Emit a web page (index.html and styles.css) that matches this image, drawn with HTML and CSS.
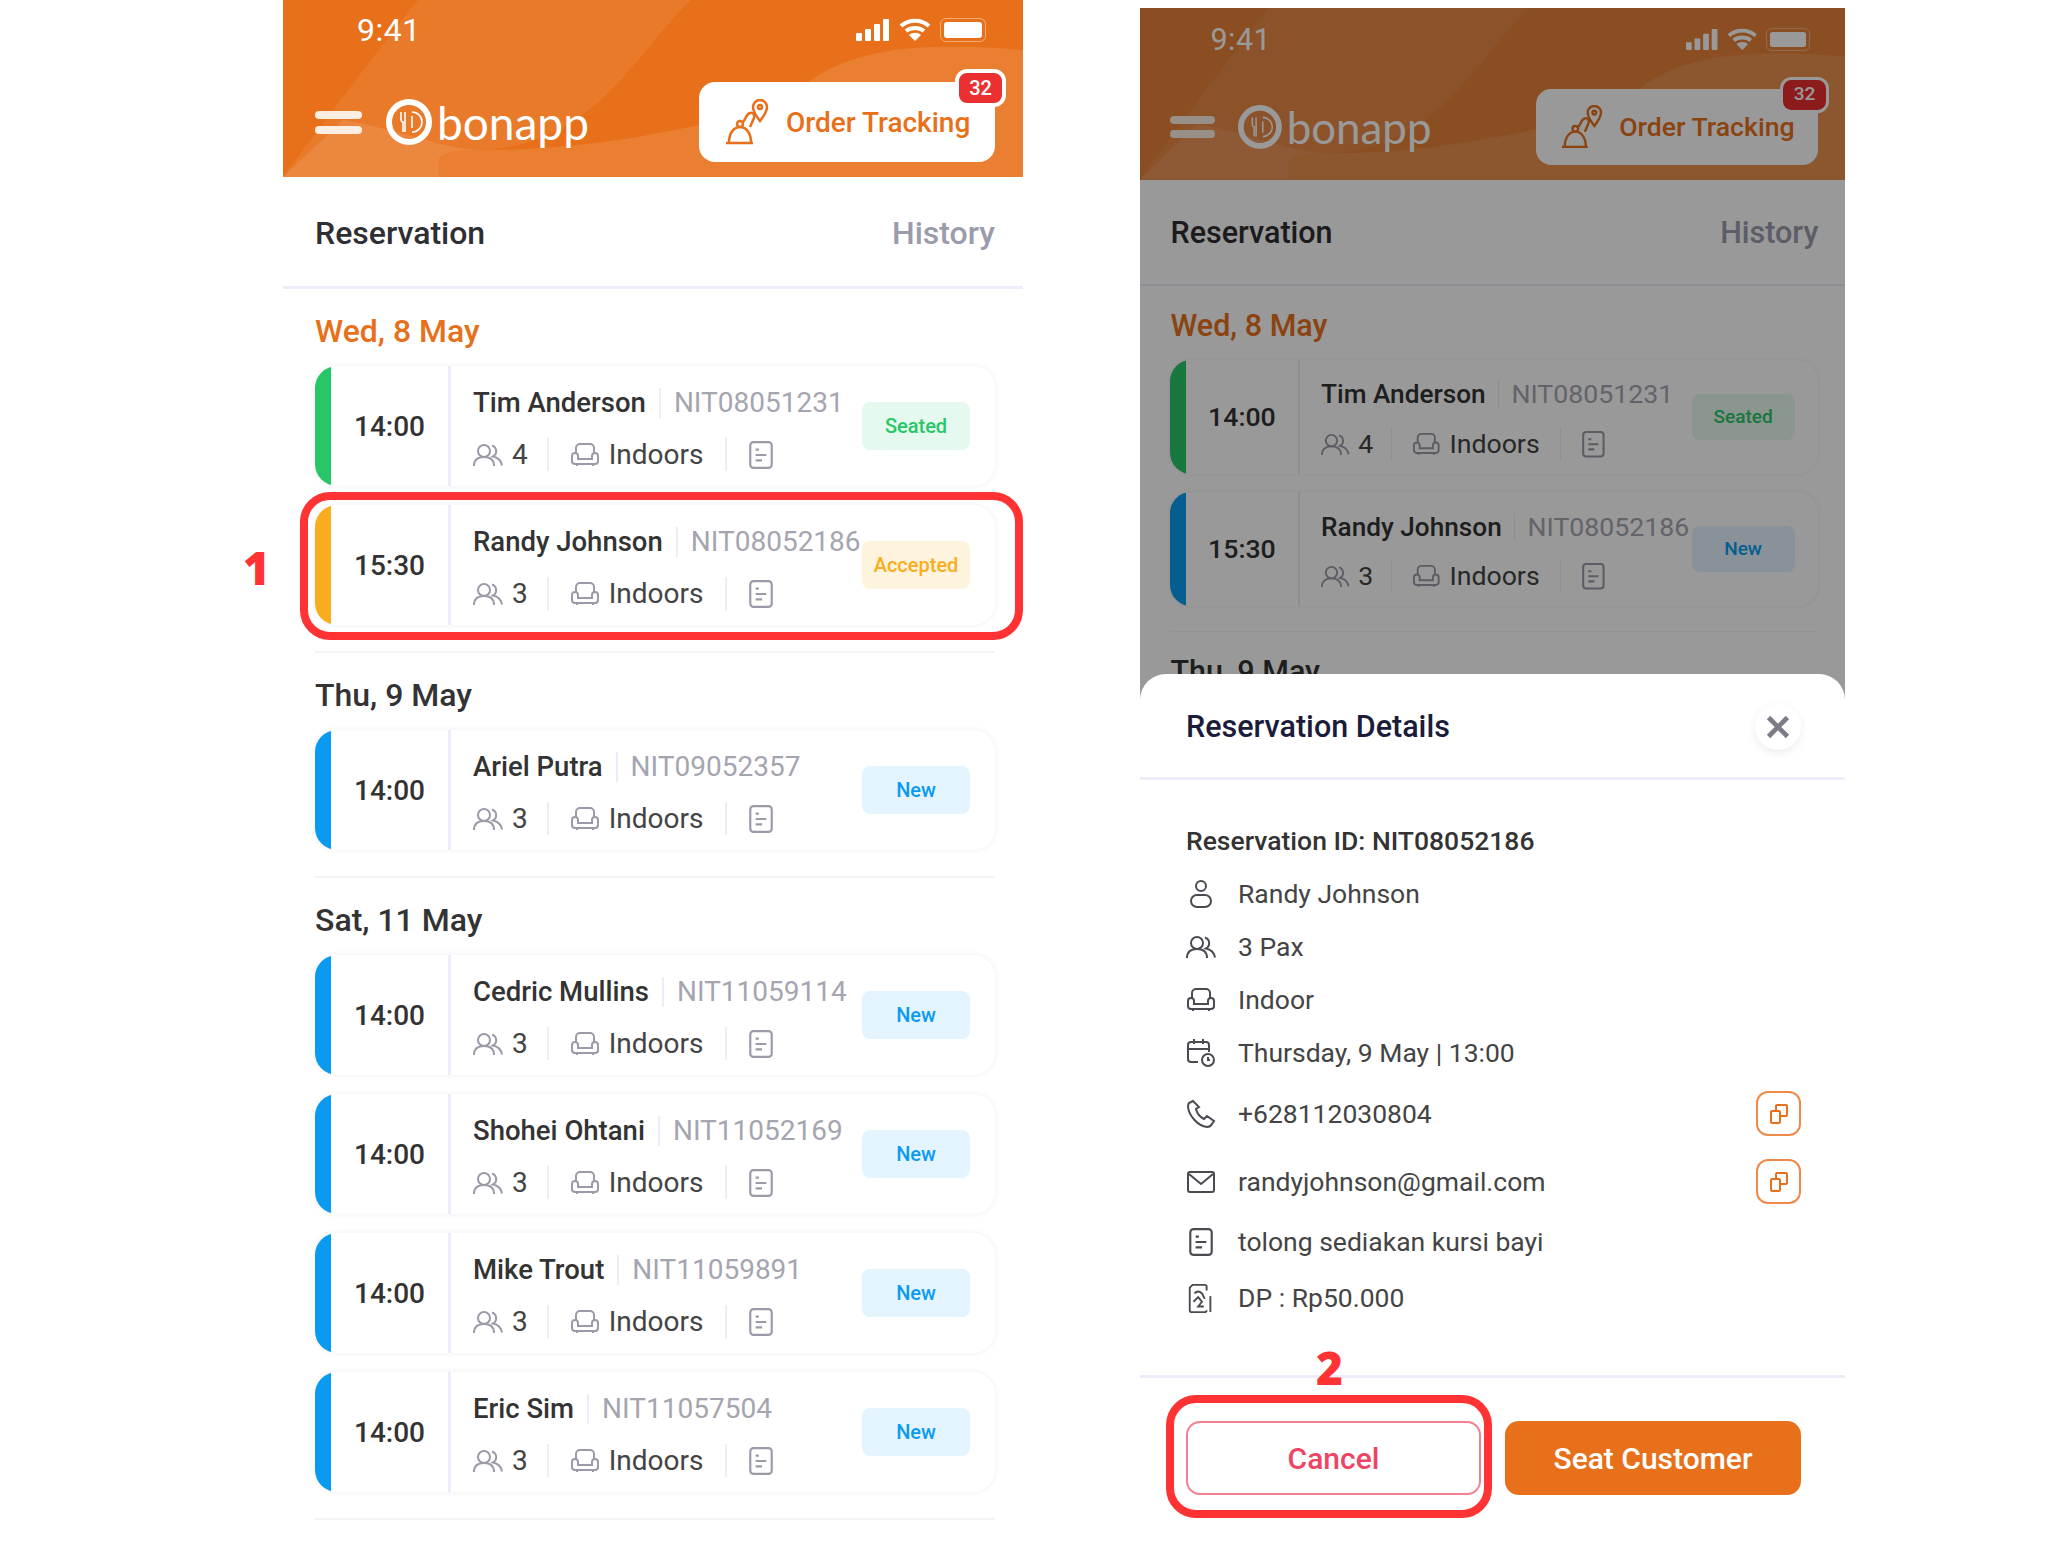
FILE: index.html
```html
<!DOCTYPE html>
<html>
<head>
  <meta charset="UTF-8">
  <title>Bonapp Reservations</title>
  <link rel="stylesheet" href="styles.css">
</head>
<body>
  <svg class="sprite" xmlns="http://www.w3.org/2000/svg">
    <symbol id="i-group" viewBox="0 0 30 24"><circle cx="11" cy="8" r="6"/><path d="M1 23c0-6 4-9 10-9s10 3 10 9"/><path d="M19 2.500a6 6 0 0 1 1 11c5 1 8 4 9 9"/></symbol>
    <symbol id="i-sofa" viewBox="0 0 30 26"><path d="M6 11V6a4 4 0 0 1 4-4h10a4 4 0 0 1 4 4v5"/><path d="M8 17v-3a3 3 0 0 0-6 0v5a3 3 0 0 0 3 3h20a3 3 0 0 0 3-3v-5a3 3 0 0 0-6 0v3z"/><path d="M7 22v2M23 22v2"/></symbol>
    <symbol id="i-note" viewBox="0 0 24 28"><rect x="2" y="2" width="20" height="24" rx="3"/><path d="M7 9h3M7 14h10M7 19h6"/></symbol>
    <symbol id="i-person" viewBox="0 0 26 30"><circle cx="13" cy="7" r="5"/><rect x="3" y="16" width="20" height="12" rx="6"/></symbol>
    <symbol id="i-calendar" viewBox="0 0 30 30"><path d="M12 24H5a3 3 0 0 1-3-3V7a3 3 0 0 1 3-3h15a3 3 0 0 1 3 3v7"/><path d="M2 11h21M8 1v5M17 1v5"/><circle cx="22" cy="22" r="6"/><path d="M22 19v3h2"/></symbol>
    <symbol id="i-phone" viewBox="0 0 30 30"><path d="M7 2 3 4c-1 1-1 3-1 4 1 9 10 19 19 20 2 0 4-1 5-3l2-3-7-5-3 3c-4-2-7-6-8-10l3-2z"/></symbol>
    <symbol id="i-mail" viewBox="0 0 30 24"><rect x="2" y="2" width="26" height="20" rx="2"/><path d="m3 4 12 10L27 4"/></symbol>
    <symbol id="i-money" viewBox="0 0 28 32"><path d="M20 8V4a2 2 0 0 0-2-2H5L2 5v24a2 2 0 0 0 2 2h14a2 2 0 0 0 2-2"/><path d="M7 11c3-3 6-2 8 0l3 6M6 20l5-5 4 5-4 5h6"/><path d="M24 14v17"/></symbol>
    <symbol id="i-copy" viewBox="0 0 20 22"><rect x="2" y="8" width="9" height="12" rx="1"/><path d="M7 8V3a1 1 0 0 1 1-1h9a1 1 0 0 1 1 1v9a1 1 0 0 1-1 1h-6"/></symbol>
    <symbol id="i-cloche" viewBox="0 0 46 46"><path d="M1 44h27M4 43c0-9 5-15 11-15s11 6 11 15"/><circle cx="15" cy="25" r="3"/><path d="M18 23c3-3 3-8 7-9 3-1 5 2 4 5l-4 9"/><path d="M35 1a7 7 0 0 0-7 7c0 5 7 14 7 14s7-9 7-14a7 7 0 0 0-7-7z"/><circle cx="35" cy="8" r="2"/></symbol>
  </svg>

  <main class="stage">
    <section class="phone">
      <div class="screen">
        <header class="app-header">
          <svg class="header-bg" viewBox="0 0 740 177" preserveAspectRatio="none"><path class="swoosh-a" d="M0 177C50 110 95 50 135 0H408C350 55 310 150 190 150 130 150 170 177 150 177z"/><path class="swoosh-b" d="M0 177 60 120C120 130 160 150 200 150 320 150 420 125 500 105 550 50 620 40 740 50V177z"/></svg>
          <div class="status-bar">
            <span class="clock">9:41</span>
            <span class="status-icons">
              <svg class="signal" viewBox="0 0 34 22"><rect x="0" y="14" width="6" height="8" rx="1"/><rect x="9" y="10" width="6" height="12" rx="1"/><rect x="18" y="5" width="6" height="17" rx="1"/><rect x="27" y="0" width="6" height="22" rx="1"/></svg>
              <svg class="wifi" viewBox="0 0 32 24"><path d="M2 8c8-7 20-7 28 0M7 13c5-4 13-4 18 0"/><path class="wifi-dot" d="m16 23-6-6c3-3 9-3 12 0z"/></svg>
              <span class="battery"><span class="battery-fill"></span></span>
            </span>
          </div>
          <div class="nav-row">
            <div class="burger"><span></span><span></span></div>
            <svg class="logo-mark" viewBox="0 0 46 46"><circle cx="23" cy="23" r="20"/><path d="M26 13a10 10 0 0 1 0 20M26 17v12M15 13v7c0 2 1 3 2 3v10M19 13v20"/></svg>
            <span class="logo-text">bonapp</span>
            <div class="tracking-btn">
              <svg class="cloche"><use href="#i-cloche"/></svg>
              <span>Order Tracking</span>
              <b class="tracking-count">32</b>
            </div>
          </div>
        </header>

        <nav class="tabs">
          <span class="tab-active">Reservation</span>
          <span class="tab-idle">History</span>
        </nav>

        <div class="list">
          <section class="day">
            <h2 class="day-title today">Wed, 8 May</h2>
            <article class="card">
              <i class="card-bar green"></i><div class="card-time">14:00</div>
              <div class="card-body">
                <div class="card-name"><span>Tim Anderson</span><em>NIT08051231</em></div>
                <div class="card-meta"><svg class="ic-group"><use href="#i-group"/></svg><span class="pax">4</span><svg class="ic-sofa"><use href="#i-sofa"/></svg><span class="place">Indoors</span><svg class="ic-note"><use href="#i-note"/></svg></div>
              </div>
              <span class="tag seated">Seated</span>
            </article>
            <article class="card">
              <i class="card-bar amber"></i><div class="card-time">15:30</div>
              <div class="card-body">
                <div class="card-name"><span>Randy Johnson</span><em>NIT08052186</em></div>
                <div class="card-meta"><svg class="ic-group"><use href="#i-group"/></svg><span class="pax">3</span><svg class="ic-sofa"><use href="#i-sofa"/></svg><span class="place">Indoors</span><svg class="ic-note"><use href="#i-note"/></svg></div>
              </div>
              <span class="tag accepted">Accepted</span>
            </article>
          </section>
          <section class="day">
            <h2 class="day-title">Thu, 9 May</h2>
            <article class="card">
              <i class="card-bar blue"></i><div class="card-time">14:00</div>
              <div class="card-body">
                <div class="card-name"><span>Ariel Putra</span><em>NIT09052357</em></div>
                <div class="card-meta"><svg class="ic-group"><use href="#i-group"/></svg><span class="pax">3</span><svg class="ic-sofa"><use href="#i-sofa"/></svg><span class="place">Indoors</span><svg class="ic-note"><use href="#i-note"/></svg></div>
              </div>
              <span class="tag new">New</span>
            </article>
          </section>
          <section class="day">
            <h2 class="day-title">Sat, 11 May</h2>
            <article class="card">
              <i class="card-bar blue"></i><div class="card-time">14:00</div>
              <div class="card-body">
                <div class="card-name"><span>Cedric Mullins</span><em>NIT11059114</em></div>
                <div class="card-meta"><svg class="ic-group"><use href="#i-group"/></svg><span class="pax">3</span><svg class="ic-sofa"><use href="#i-sofa"/></svg><span class="place">Indoors</span><svg class="ic-note"><use href="#i-note"/></svg></div>
              </div>
              <span class="tag new">New</span>
            </article>
            <article class="card">
              <i class="card-bar blue"></i><div class="card-time">14:00</div>
              <div class="card-body">
                <div class="card-name"><span>Shohei Ohtani</span><em>NIT11052169</em></div>
                <div class="card-meta"><svg class="ic-group"><use href="#i-group"/></svg><span class="pax">3</span><svg class="ic-sofa"><use href="#i-sofa"/></svg><span class="place">Indoors</span><svg class="ic-note"><use href="#i-note"/></svg></div>
              </div>
              <span class="tag new">New</span>
            </article>
            <article class="card">
              <i class="card-bar blue"></i><div class="card-time">14:00</div>
              <div class="card-body">
                <div class="card-name"><span>Mike Trout</span><em>NIT11059891</em></div>
                <div class="card-meta"><svg class="ic-group"><use href="#i-group"/></svg><span class="pax">3</span><svg class="ic-sofa"><use href="#i-sofa"/></svg><span class="place">Indoors</span><svg class="ic-note"><use href="#i-note"/></svg></div>
              </div>
              <span class="tag new">New</span>
            </article>
            <article class="card">
              <i class="card-bar blue"></i><div class="card-time">14:00</div>
              <div class="card-body">
                <div class="card-name"><span>Eric Sim</span><em>NIT11057504</em></div>
                <div class="card-meta"><svg class="ic-group"><use href="#i-group"/></svg><span class="pax">3</span><svg class="ic-sofa"><use href="#i-sofa"/></svg><span class="place">Indoors</span><svg class="ic-note"><use href="#i-note"/></svg></div>
              </div>
              <span class="tag new">New</span>
            </article>
          </section>
        </div>
      </div>
    </section>

    <section class="phone phone-details">
      <div class="screen">
        <header class="app-header">
          <svg class="header-bg" viewBox="0 0 740 177" preserveAspectRatio="none"><path class="swoosh-a" d="M0 177C50 110 95 50 135 0H408C350 55 310 150 190 150 130 150 170 177 150 177z"/><path class="swoosh-b" d="M0 177 60 120C120 130 160 150 200 150 320 150 420 125 500 105 550 50 620 40 740 50V177z"/></svg>
          <div class="status-bar">
            <span class="clock">9:41</span>
            <span class="status-icons">
              <svg class="signal" viewBox="0 0 34 22"><rect x="0" y="14" width="6" height="8" rx="1"/><rect x="9" y="10" width="6" height="12" rx="1"/><rect x="18" y="5" width="6" height="17" rx="1"/><rect x="27" y="0" width="6" height="22" rx="1"/></svg>
              <svg class="wifi" viewBox="0 0 32 24"><path d="M2 8c8-7 20-7 28 0M7 13c5-4 13-4 18 0"/><path class="wifi-dot" d="m16 23-6-6c3-3 9-3 12 0z"/></svg>
              <span class="battery"><span class="battery-fill"></span></span>
            </span>
          </div>
          <div class="nav-row">
            <div class="burger"><span></span><span></span></div>
            <svg class="logo-mark" viewBox="0 0 46 46"><circle cx="23" cy="23" r="20"/><path d="M26 13a10 10 0 0 1 0 20M26 17v12M15 13v7c0 2 1 3 2 3v10M19 13v20"/></svg>
            <span class="logo-text">bonapp</span>
            <div class="tracking-btn">
              <svg class="cloche"><use href="#i-cloche"/></svg>
              <span>Order Tracking</span>
              <b class="tracking-count">32</b>
            </div>
          </div>
        </header>

        <nav class="tabs">
          <span class="tab-active">Reservation</span>
          <span class="tab-idle">History</span>
        </nav>

        <div class="list">
          <section class="day">
            <h2 class="day-title today">Wed, 8 May</h2>
            <article class="card">
              <i class="card-bar green"></i><div class="card-time">14:00</div>
              <div class="card-body">
                <div class="card-name"><span>Tim Anderson</span><em>NIT08051231</em></div>
                <div class="card-meta"><svg class="ic-group"><use href="#i-group"/></svg><span class="pax">4</span><svg class="ic-sofa"><use href="#i-sofa"/></svg><span class="place">Indoors</span><svg class="ic-note"><use href="#i-note"/></svg></div>
              </div>
              <span class="tag seated">Seated</span>
            </article>
            <article class="card">
              <i class="card-bar blue"></i><div class="card-time">15:30</div>
              <div class="card-body">
                <div class="card-name"><span>Randy Johnson</span><em>NIT08052186</em></div>
                <div class="card-meta"><svg class="ic-group"><use href="#i-group"/></svg><span class="pax">3</span><svg class="ic-sofa"><use href="#i-sofa"/></svg><span class="place">Indoors</span><svg class="ic-note"><use href="#i-note"/></svg></div>
              </div>
              <span class="tag new">New</span>
            </article>
          </section>
          <section class="day">
            <h2 class="day-title">Thu, 9 May</h2>
          </section>
        </div>
      </div>

      <div class="scrim"></div>

      <div class="sheet">
        <div class="sheet-head">
          <h3>Reservation Details</h3>
          <span class="sheet-close">
            <svg viewBox="0 0 22 22"><path d="M3 3l16 16M19 3 3 19"/></svg>
          </span>
        </div>
        <div class="sheet-body">
          <p class="sheet-id">Reservation ID: NIT08052186</p>
          <div class="row"><svg class="row-ic"><use href="#i-person"/></svg><span>Randy Johnson</span></div>
          <div class="row"><svg class="row-ic"><use href="#i-group"/></svg><span>3 Pax</span></div>
          <div class="row"><svg class="row-ic"><use href="#i-sofa"/></svg><span>Indoor</span></div>
          <div class="row"><svg class="row-ic"><use href="#i-calendar"/></svg><span>Thursday, 9 May | 13:00</span></div>
          <div class="row row-copy"><svg class="row-ic"><use href="#i-phone"/></svg><span>+628112030804</span><span class="copy-btn"><svg><use href="#i-copy"/></svg></span></div>
          <div class="row row-copy"><svg class="row-ic"><use href="#i-mail"/></svg><span>randyjohnson@gmail.com</span><span class="copy-btn"><svg><use href="#i-copy"/></svg></span></div>
          <div class="row"><svg class="row-ic"><use href="#i-note"/></svg><span>tolong sediakan kursi bayi</span></div>
          <div class="row row-last"><svg class="row-ic"><use href="#i-money"/></svg><span>DP : Rp50.000</span></div>
        </div>
        <div class="sheet-foot">
          <button class="btn-cancel">Cancel</button>
          <button class="btn-seat">Seat Customer</button>
        </div>
      </div>
    </section>

    <div class="callout callout-one"></div>
    <span class="callout-num num-one">1</span>
    <div class="callout callout-two"></div>
    <span class="callout-num num-two">2</span>
  </main>
</body>
</html>
```

FILE: styles.css
```css
* {
  box-sizing: border-box;
}

body {
  margin: 0;
  background: #fff;
  font-family: Roboto, "Liberation Sans", sans-serif;
  color: #333;
}

.sprite {
  display: none;
}

.stage {
  position: relative;
  display: flex;
  gap: 117px;
  width: 2048px;
  height: 1550px;
  padding-left: 283px;
  overflow: hidden;
}

/* phones */
.phone {
  flex: none;
  width: 740px;
  height: 1550px;
  overflow: hidden;
}

.phone-details {
  position: relative;
  width: 705px;
  height: 1542px;
  margin-top: 8px;
}

.phone-details .screen {
  zoom: 0.953;
}

.phone-details .app-header {
  height: 180px;
  padding-top: 3px;
  background: #e8833a;
}

/* header */
.app-header {
  position: relative;
  height: 177px;
  background: #e8701a;
}

.header-bg {
  position: absolute;
  left: 0;
  top: 0;
  width: 100%;
  height: 100%;
}

.swoosh-a {
  fill: #fff;
  fill-opacity: 0.07;
}

.swoosh-b {
  fill: #fff;
  fill-opacity: 0.1;
}

.status-bar {
  position: relative;
  display: flex;
  justify-content: space-between;
  align-items: center;
  height: 60px;
  padding: 0 37px 0 74px;
  color: #fff;
}

.clock {
  font-size: 32px;
  letter-spacing: 0.5px;
}

.status-icons {
  display: flex;
  align-items: center;
  gap: 9px;
}

.signal {
  width: 34px;
  height: 22px;
  fill: #fff;
}

.wifi {
  width: 32px;
  height: 24px;
  fill: none;
  stroke: #fff;
  stroke-width: 4;
}

.wifi-dot {
  fill: #fff;
  stroke: none;
}

.battery {
  display: block;
  width: 46px;
  height: 24px;
  padding: 3px;
  border: 1px solid rgba(255,255,255,0.4);
  border-radius: 6px;
}

.battery-fill {
  display: block;
  height: 100%;
  background: #fff;
  border-radius: 3px;
}

.nav-row {
  position: relative;
  display: flex;
  align-items: center;
  height: 80px;
  margin-top: 22px;
  padding: 0 28px 0 32px;
}

.burger {
  width: 47px;
  margin-right: 24px;
}

.burger span {
  display: block;
  height: 8px;
  margin: 7px 0;
  background: #fdeee3;
  border-radius: 4px;
}

.logo-mark {
  width: 46px;
  height: 46px;
  margin-right: 5px;
  fill: none;
  stroke: #fff;
}

.logo-mark circle {
  stroke-width: 6;
}

.logo-mark path {
  stroke-width: 1.600;
}

.logo-text {
  font-family: Lato, sans-serif;
  font-size: 46px;
  line-height: 1;
  color: #fff;
  margin-top: 2px;
}

.tracking-btn {
  position: relative;
  display: flex;
  align-items: center;
  width: 296px;
  height: 80px;
  margin-left: auto;
  padding-left: 26px;
  background: #fff;
  border-radius: 16px;
  color: #e8701a;
  font-size: 28px;
  font-weight: 500;
}

.cloche {
  width: 46px;
  height: 46px;
  margin-right: 15px;
  fill: none;
  stroke: #e8701a;
  stroke-width: 2.500;
}

.tracking-count {
  position: absolute;
  right: -11px;
  top: -13px;
  width: 51px;
  height: 38px;
  line-height: 30px;
  text-align: center;
  background: #ea3030;
  border: 4px solid #fff;
  border-radius: 12px;
  color: #fff;
  font-size: 20px;
  font-weight: 500;
}

/* tabs */
.tabs {
  display: flex;
  justify-content: space-between;
  align-items: center;
  height: 112px;
  padding: 2px 28px 0 32px;
  border-bottom: 3px solid #ecedf8;
  font-size: 32px;
  font-weight: 500;
}

.tab-active {
  color: #2e2e33;
}

.tab-idle {
  color: #9a9cab;
}

/* reservation list */
.list {
  padding: 22px 28px 0 32px;
}

.day {
  margin-bottom: 22px;
  padding-bottom: 26px;
  border-bottom: 2px solid #f3f3f6;
}

.day-title {
  margin: 0 0 15px;
  font-size: 32px;
  font-weight: 500;
  line-height: 40px;
  color: #333;
}

.day-title.today {
  color: #e8701a;
}

.card {
  display: flex;
  align-items: center;
  height: 120px;
  margin-bottom: 19px;
  background: #fff;
  border-radius: 22px;
  box-shadow: 0 0 6px rgba(30,30,60,0.07);
  overflow: hidden;
}

.card:last-child {
  margin-bottom: 0;
}

.card-bar {
  flex: none;
  width: 16px;
  height: 100%;
}

.card-bar.green { background: #27c767; }
.card-bar.amber { background: #f9ad1e; }
.card-bar.blue { background: #0a9bf0; }

.card-time {
  flex: none;
  width: 120px;
  height: 100%;
  border-right: 3px solid #ecedf8;
  line-height: 121px;
  text-align: center;
  font-size: 28px;
  font-weight: 500;
}

.card-body {
  flex: 1;
  min-width: 0;
  padding: 5px 0 0 22px;
}

.card-name {
  display: flex;
  align-items: center;
  height: 34px;
  font-size: 27.500px;
  font-weight: 500;
  white-space: nowrap;
}

.card-name em {
  margin-left: 13px;
  padding-left: 13px;
  border-left: 2px solid #ecedf8;
  font-size: 28px;
  font-style: normal;
  font-weight: 400;
  line-height: 30px;
  color: #a5a5b0;
}

.card-meta {
  display: flex;
  align-items: center;
  height: 34px;
  margin-top: 18px;
  font-size: 28px;
  color: #444;
}

.card-meta svg {
  fill: none;
  stroke: #9a9aa8;
  stroke-width: 2;
}

.ic-group {
  width: 30px;
  height: 24px;
}

.pax {
  margin-left: 9px;
  padding-right: 19px;
  border-right: 2px solid #ecedf8;
}

.ic-sofa {
  width: 30px;
  height: 26px;
  margin-left: 21px;
}

.place {
  margin-left: 9px;
  padding-right: 21px;
  border-right: 2px solid #ecedf8;
}

.ic-note {
  width: 26px;
  height: 30px;
  margin-left: 21px;
}

.tag {
  flex: none;
  width: 108px;
  height: 48px;
  margin-right: 25px;
  line-height: 48px;
  text-align: center;
  border-radius: 8px;
  font-size: 20px;
  font-weight: 500;
}

.tag.seated { background: #e6f9ee; color: #27c767; }
.tag.accepted { background: #fef3dd; color: #f9ad1e; }
.tag.new { background: #e3f4fe; color: #0a9bf0; }

/* dim + bottom sheet */
.scrim {
  position: absolute;
  inset: 0;
  background: rgba(0,0,0,0.4);
}

.sheet {
  position: absolute;
  left: 0;
  right: 0;
  bottom: 0;
  display: flex;
  flex-direction: column;
  height: 876px;
  background: #fff;
  border-radius: 26px 26px 0 0;
}

.sheet-head {
  display: flex;
  justify-content: space-between;
  align-items: center;
  flex: none;
  height: 106px;
  padding: 2px 44px 0 46px;
  border-bottom: 3px solid #ecedf8;
}

.sheet-head h3 {
  margin: 0;
  font-size: 30.500px;
  font-weight: 500;
  color: #1b1b3a;
}

.sheet-close {
  display: flex;
  align-items: center;
  justify-content: center;
  width: 46px;
  height: 46px;
  border-radius: 50%;
  box-shadow: 0 3px 10px rgba(0,0,0,0.08);
}

.sheet-close svg {
  width: 26px;
  height: 26px;
  fill: none;
  stroke: #7c7c88;
  stroke-width: 4;
}

.sheet-body {
  flex: 1;
  padding: 38px 44px 0 46px;
}

.sheet-id {
  margin: 0 0 8px;
  height: 45px;
  line-height: 45px;
  font-size: 26.500px;
  font-weight: 500;
}

.row {
  display: flex;
  align-items: center;
  height: 45px;
  margin-bottom: 8px;
  font-size: 26.500px;
  color: #444;
}

.row-copy {
  margin: 16px 0 15px;
}

.row-copy + .row-copy {
  margin-top: 23px;
}

.row-last {
  margin-top: 11px;
}

.row-ic {
  flex: none;
  width: 30px;
  height: 30px;
  margin-right: 22px;
  fill: none;
  stroke: #4a4a52;
  stroke-width: 2;
}

.copy-btn {
  display: flex;
  align-items: center;
  justify-content: center;
  width: 45px;
  height: 45px;
  margin-left: auto;
  border: 2px solid #f08a4a;
  border-radius: 12px;
}

.copy-btn svg {
  width: 20px;
  height: 22px;
  fill: none;
  stroke: #e8701a;
  stroke-width: 2;
}

.sheet-foot {
  display: flex;
  gap: 24px;
  flex: none;
  height: 175px;
  padding: 43px 44px 0 46px;
  border-top: 3px solid #ecedf8;
}

.sheet-foot button {
  height: 74px;
  border-radius: 14px;
  font-family: inherit;
  font-size: 30px;
  font-weight: 500;
}

.btn-cancel {
  width: 295px;
  background: #fff;
  border: 2px solid #f5808f;
  color: #ef4565;
}

.btn-seat {
  width: 296px;
  background: #e8701a;
  border: none;
  color: #fff;
}

/* red annotations on top of the screenshots */
.callout {
  position: absolute;
  border: 8px solid #ff3333;
  border-radius: 30px;
}

.callout-one {
  left: 300px;
  top: 492px;
  width: 723px;
  height: 148px;
}

.callout-two {
  left: 1166px;
  top: 1395px;
  width: 326px;
  height: 123px;
}

.callout-num {
  position: absolute;
  font-family: "Open Sans", sans-serif;
  font-size: 46px;
  font-weight: 800;
  line-height: 60px;
  color: #ff3333;
}

.num-one {
  left: 243px;
  top: 537px;
}

.num-two {
  left: 1316px;
  top: 1337px;
}
```
